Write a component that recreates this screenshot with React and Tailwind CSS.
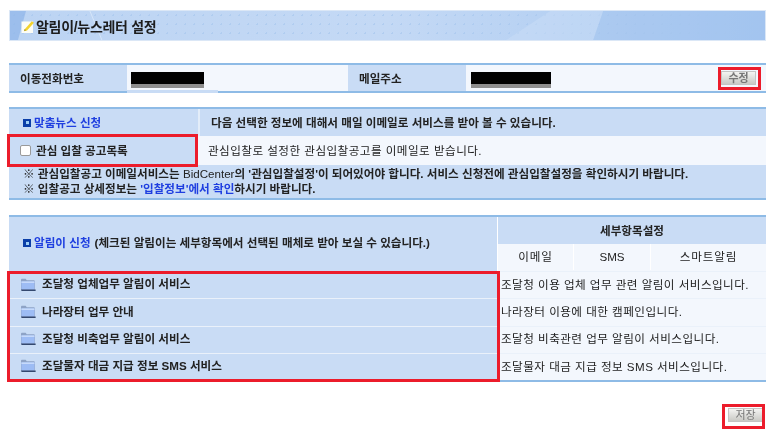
import React from "react";

const FONT = { fontFamily: '"Liberation Sans", "Noto Sans CJK KR", sans-serif' };

const labelBg = "bg-[#c9dcf5]";
const valueBg = "bg-[#f3f7fd]";

const RedBox = ({ className }) => (
  <div className={`pointer-events-none absolute border-[3px] border-[#ec1c2b] ${className}`} />
);

const Bullet = () => (
  <span className="mr-[3px] inline-flex h-[8px] w-[8px] shrink-0 items-center justify-center bg-[#0b3fa8]">
    <span className="h-[3px] w-[3px] bg-[#9fd0f5]" />
  </span>
);

const FolderIcon = () => (
  <svg width="16" height="15" viewBox="0 0 16 15" className="shrink-0" aria-hidden>
    <path d="M1 3c0-.8.5-1.2 1.2-1.2h3.4l1.2 1.4h6.8c.8 0 1.2.4 1.2 1.1v8.5H1V3Z" fill="#8ea3c6" />
    <path d="M1.4 4.4h13v8.2h-13z" fill="#9dbcf4" />
    <path d="M1.4 4.4h13v1.6h-13z" fill="#c7dafb" />
    <path d="M1 12.4h14.6v1.6H1.6z" fill="#34486e" />
  </svg>
);

const PencilNote = () => (
  <svg width="14" height="14" viewBox="0 0 14 14" className="shrink-0" aria-hidden>
    <rect x="0.5" y="1.5" width="11.5" height="11.5" fill="#fdfdf6" />
    <path d="M3.5 9.5 10.8 1.2l2.2 1.6-7 7.6-3 .9.5-1.8Z" fill="#f3d32e" />
    <path d="M3 10.8l.6-1.6 1.5 1.1-2.1.5Z" fill="#8a7a2a" />
  </svg>
);

const GrayButton = ({ children }) => (
  <button className="flex h-[14px] w-[35px] items-center justify-center border border-[#c4c4c4] bg-gradient-to-b from-[#f4f4f2] to-[#c9c9c5] text-[11px] leading-none text-[#777]">
    {children}
  </button>
);

const Redacted = ({ width }) => (
  <div className="relative mt-[4px] h-[16px]" style={{ width }}>
    <div className="absolute inset-x-0 bottom-0 h-[6px] bg-[#8e8e8e]" />
    <div className="absolute inset-x-0 top-0 h-[12px] bg-black" />
  </div>
);

const services = [
  ["조달청 업체업무 알림이 서비스", "조달청 이용 업체 업무 관련 알림이 서비스입니다."],
  ["나라장터 업무 안내", "나라장터 이용에 대한 캠페인입니다."],
  ["조달청 비축업무 알림이 서비스", "조달청 비축관련 업무 알림이 서비스입니다."],
  ["조달물자 대금 지급 정보 SMS 서비스", "조달물자 대금 지급 정보 SMS 서비스입니다."],
];

export default function App() {
  return (
    <div className="relative h-[436px] w-[773px] overflow-hidden bg-white text-[11.6px] text-[#222] blur-[0.4px]" style={FONT}>
      <div className="flex flex-col pl-[9px] pr-[7px] pt-[10px]">
        {/* title banner */}
        <div className="relative flex h-[31px] items-center overflow-hidden border border-[#dbe7f6] bg-gradient-to-r from-[#bcd4f3] via-[#c4d9f5] to-[#a6c7f0] pl-[11px] pt-[3px]">
          <div className="absolute inset-0 bg-[radial-gradient(#a9c8ee_1px,transparent_1px)] bg-[length:9px_9px] opacity-70" />
          <svg className="absolute inset-0 h-full w-full" viewBox="0 0 756 31" preserveAspectRatio="none" aria-hidden>
            <path d="M0 0h16L8 31H0Z" fill="#8fb5e8" opacity="0.7" />
            <path d="M80 0l12 31" stroke="#d6e5f8" fill="none" />
            <path d="M497 31 L541 0 H594 L584 31Z" fill="#cfe0f7" opacity="0.4" />
            <path d="M584 31 L594 0 H756 V31Z" fill="#9dc0ee" opacity="0.35" />
          </svg>
          <div className="relative flex items-center gap-[1px]">
            <PencilNote />
            <span className="text-[14px] font-semibold tracking-[-0.3px] text-[#1d1d1d]">알림이/뉴스레터 설정</span>
          </div>
        </div>

        {/* contact row */}
        <div className="relative mt-[22px] grid h-[30px] grid-cols-[118px_221px_118px_1fr] border-y-2 border-[#8ebbe6] font-semibold">
          <div className={`flex items-center pl-[11px] pt-[1px] ${labelBg}`}>이동전화번호</div>
          <div className={`flex items-center pl-[4px] ${valueBg}`}>
            <Redacted width={73} />
          </div>
          <div className={`flex items-center pl-[11px] pt-[1px] ${labelBg}`}>메일주소</div>
          <div className={`flex items-center justify-between pl-[5px] pr-[10px] ${valueBg}`}>
            <Redacted width={80} />
            <GrayButton>수정</GrayButton>
          </div>
          <div className="absolute bottom-[-2px] left-[118px] h-[3px] w-[91px] bg-[#c9dcf5]" />
        </div>

        {/* matching news */}
        <div className="mt-[14px] flex flex-col border-y-2 border-[#8ebbe6]">
          <div className={`grid h-[27px] grid-cols-[189px_1fr] ${labelBg}`}>
            <div className="flex items-center pl-[14px] font-semibold text-[#1f3fe0]">
              <Bullet />맞춤뉴스 신청
            </div>
            <div className="flex items-center border-l-2 border-[#e3edf9] pl-[11px] font-semibold">
              다음 선택한 정보에 대해서 매일 이메일로 서비스를 받아 볼 수 있습니다.
            </div>
          </div>
          <div className="grid h-[29px] grid-cols-[189px_1fr]">
            <div className={`flex items-center pl-[11px] font-semibold ${labelBg}`}>
              <span className="mr-[5px] h-[11px] w-[11px] rounded-[2px] border border-[#9a9a9a] bg-white" />
              관심 입찰 공고목록
            </div>
            <div className={`flex items-center pl-[10px] tracking-[0.45px] ${valueBg}`}>
              관심입찰로 설정한 관심입찰공고를 이메일로 받습니다.
            </div>
          </div>
          <div className={`flex h-[33px] flex-col justify-center pb-[2px] pl-[14px] font-semibold leading-[15px] ${labelBg}`}>
            <div>
              ※ 관심입찰공고 이메일서비스는 <span className="font-normal">BidCenter</span>의 '관심입찰설정'이 되어있어야 합니다. 서비스 신청전에 관심입찰설정을 확인하시기 바랍니다.
            </div>
            <div>
              ※ 입찰공고 상세정보는 <span className="text-[#1f3fe0]">'입찰정보'에서 확인</span>하시기 바랍니다.
            </div>
          </div>
        </div>

        {/* alert services */}
        <div className="mt-[15px] border-y-2 border-[#8ebbe6]">
          <div className="grid grid-cols-[488px_1fr]">
            <div className={`flex items-center pb-[2px] pl-[14px] font-semibold ${labelBg}`}>
              <Bullet />
              <span className="text-[#1f3fe0]">알림이 신청</span>
              <span className="ml-[4px]">(체크된 알림이는 세부항목에서 선택된 매체로 받아 보실 수 있습니다.)</span>
            </div>
            <div className="flex flex-col border-l border-white">
              <div className={`flex h-[27px] items-center justify-center font-semibold ${labelBg}`}>세부항목설정</div>
              <div className={`grid h-[27px] grid-cols-[76px_77px_1fr] pb-[1px] text-center tracking-[0.8px] ${valueBg}`}>
                <div className="flex items-center justify-center border-r border-white">이메일</div>
                <div className="flex items-center justify-center border-r border-white tracking-normal">SMS</div>
                <div className="flex items-center justify-center">스마트알림</div>
              </div>
            </div>
          </div>
          {services.map(([name, desc]) => (
            <div key={name} className="grid h-[27.25px] grid-cols-[488px_1fr] border-t border-[#eaf1fa]">
              <div className={`flex items-center gap-[6px] pb-[2px] pl-[11px] font-semibold ${labelBg}`}>
                <FolderIcon />
                {name}
              </div>
              <div className={`flex items-center pb-[1px] pl-[4px] tracking-[0.45px] ${valueBg}`}>{desc}</div>
            </div>
          ))}
        </div>

        <div className="mt-[26px] flex justify-end pr-[3px]">
          <GrayButton>저장</GrayButton>
        </div>
      </div>

      <RedBox className="left-[718px] top-[67px] h-[23px] w-[43px]" />
      <RedBox className="left-[7px] top-[134px] h-[33px] w-[191px]" />
      <RedBox className="left-[7px] top-[271px] h-[111px] w-[493px]" />
      <RedBox className="left-[722px] top-[404px] h-[25px] w-[43px]" />
    </div>
  );
}
